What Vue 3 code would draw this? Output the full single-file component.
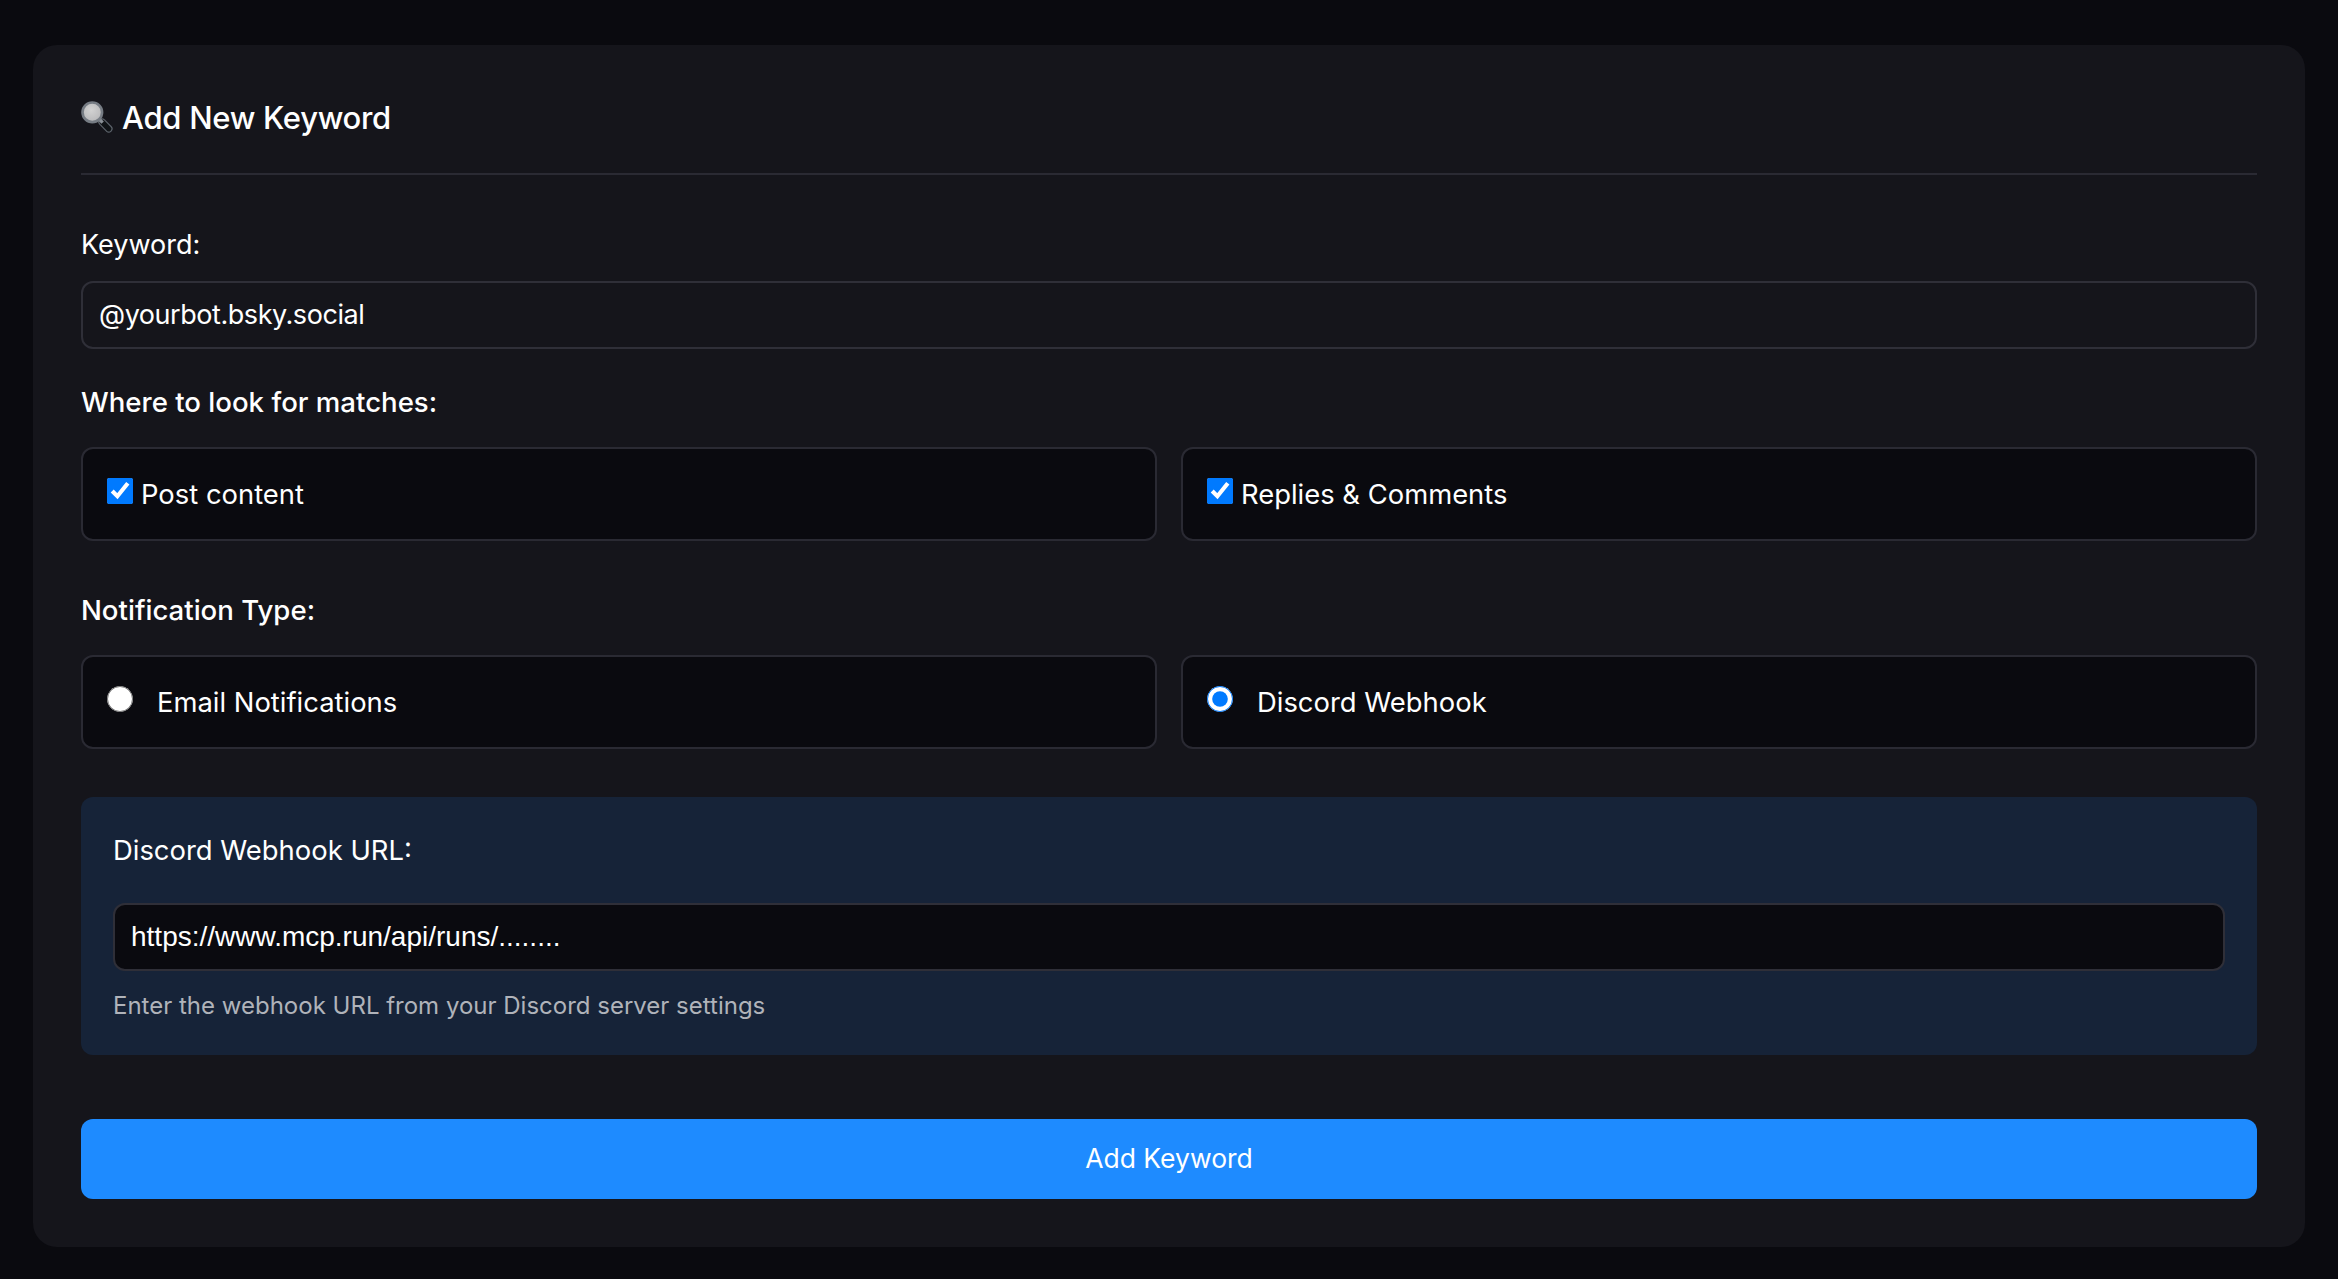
<script setup>
const scopes = [
  { id: 'post', label: 'Post content' },
  { id: 'replies', label: 'Replies & Comments' },
]
const types = [
  { id: 'email', label: 'Email Notifications', checked: false },
  { id: 'discord', label: 'Discord Webhook', checked: true },
]
</script>

<template>
  <div class="page">
    <main class="card">
      <h2 class="title">
        <svg class="lens" viewBox="0 0 34 34" aria-hidden="true">
          <defs>
            <radialGradient id="glass" cx="45%" cy="40%" r="60%">
              <stop offset="0" stop-color="#d2d2d2" />
              <stop offset="1" stop-color="#b8b8ba" />
            </radialGradient>
          </defs>
          <path d="M22.500 22.500 L29.500 29.500" stroke="#5c636b" stroke-width="8" stroke-linecap="round" />
          <path d="M22.500 22.500 L29.500 29.500" stroke="#101316" stroke-width="5.600" stroke-linecap="round" />
          <path d="M19 19 L23 23" stroke="#8a9097" stroke-width="3.500" />
          <circle cx="12" cy="12" r="10.400" fill="url(#glass)" stroke="#767c84" stroke-width="2.800" />
        </svg>
        <span>Add New Keyword</span>
      </h2>

      <label class="label keyword-label" for="keyword">Keyword:</label>
      <input id="keyword" class="field" type="text" value="@yourbot.bsky.social" />

      <div class="label section-label first">Where to look for matches:</div>
      <div class="options">
        <label v-for="s in scopes" :key="s.id" class="option">
          <input type="checkbox" checked />
          <span class="check-text">{{ s.label }}</span>
        </label>
      </div>

      <div class="label section-label">Notification Type:</div>
      <div class="options">
        <label v-for="t in types" :key="t.id" class="option">
          <input type="radio" name="type" :checked="t.checked" />
          <span class="radio-text">{{ t.label }}</span>
        </label>
      </div>

      <section class="webhook">
        <label class="label webhook-label" for="url">Discord Webhook URL:</label>
        <input id="url" class="field" type="text" value="https://www.mcp.run/api/runs/........" />
        <p class="hint">Enter the webhook URL from your Discord server settings</p>
      </section>

      <button class="submit" type="button">Add Keyword</button>
    </main>
  </div>
</template>

<style>
html, body { background: #0a0a0f; }
</style>

<style scoped>
.page {
  box-sizing: border-box;
  width: 2338px;
  height: 1279px;
  padding: 45px 33px 32px;
  background: #0a0a0f;
  font-family: Inter, "Liberation Sans", sans-serif;
  color: #fff;
  overflow: hidden;
}
.card {
  box-sizing: border-box;
  height: 1202px;
  padding: 48px;
  background: #15151b;
  border-radius: 24px;
}
.title {
  display: flex;
  align-items: center;
  gap: 9px;
  margin: 0;
  height: 50px;
  padding-bottom: 30px;
  border-bottom: 2px solid #2a2a33;
  font-size: 31px;
  font-weight: 450;
  line-height: 52px;
  letter-spacing: -0.3px;
}
.lens { width: 32px; height: 32px; flex: none; margin-top: -2px; }
.label {
  display: block;
  font-size: 27px;
  line-height: 34px;
  font-weight: 400;
}
.keyword-label { margin: 53px 0 19px; }
.section-label {
  margin: 52px 0 28px;
  font-size: 27.6px;
  font-weight: 450;
}
.section-label.first { margin-top: 36px; }
.field {
  display: block;
  box-sizing: border-box;
  width: 100%;
  height: 68px;
  padding: 0 16px 2px;
  background: transparent;
  border: 2px solid #2f2f38;
  border-radius: 12px;
  color: #fff;
  font-family: Inter, sans-serif;
  font-size: 27px;
  letter-spacing: -0.45px;
  outline: none;
}
.options {
  display: grid;
  grid-template-columns: 1fr 1fr;
  gap: 24px;
}
.option {
  display: flex;
  align-items: center;
  box-sizing: border-box;
  height: 94px;
  padding: 0 24px;
  background: #0a0a0f;
  border: 2px solid #2a2a33;
  border-radius: 12px;
  font-size: 27.4px;
}
.option input {
  flex: none;
  width: 26px;
  height: 26px;
  margin: -6px 0 0;
  accent-color: #007aff;
}
.check-text { margin-left: 8px; }
.radio-text { margin-left: 24px; }
.webhook {
  margin-top: 48px;
  padding: 16px 32px 32px;
  background: #162338;
  border-radius: 12px;
}
.webhook-label { margin: 20px 0 36px; font-size: 27.4px; }
.webhook .field {
  padding-bottom: 0;
  background: #0a0a0f;
  font-family: "Liberation Sans", Arial, sans-serif;
  font-size: 28px;
  letter-spacing: 0;
}
.hint {
  margin: 18px 0 0;
  font-size: 24px;
  line-height: 34px;
  color: #b0b3ba;
}
.submit {
  display: block;
  width: 100%;
  height: 80px;
  margin-top: 64px;
  padding: 0 0 2px;
  background: #1e8bff;
  border: 0;
  border-radius: 12px;
  color: #fff;
  font-family: Inter, sans-serif;
  font-size: 26.5px;
  font-weight: 400;
}
</style>
